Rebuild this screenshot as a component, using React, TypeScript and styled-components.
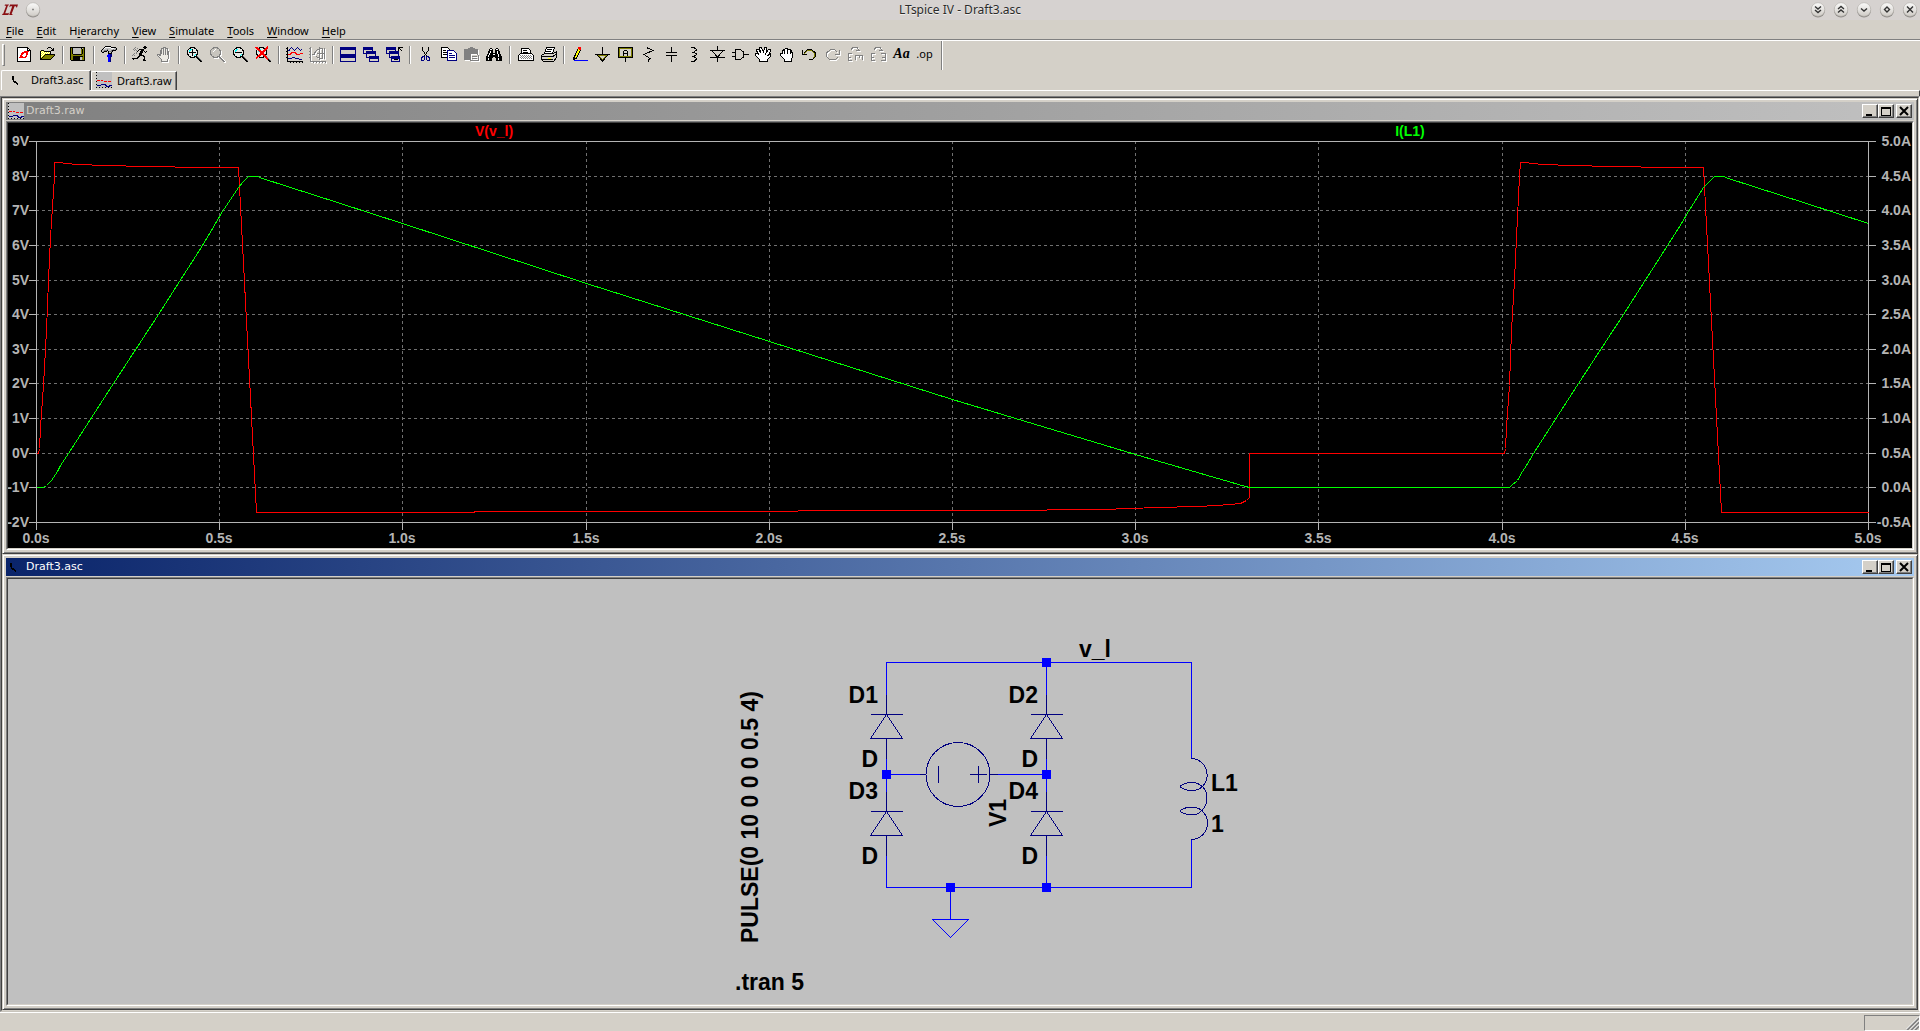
import React, { useLayoutEffect, useRef, useState } from 'react';
import styled, { createGlobalStyle, css } from 'styled-components';

const FACE = '#d4d0c8';
const SHADOW = '#808080';
const DARK = '#404040';

const Global = createGlobalStyle`
  * { box-sizing: border-box; }
  html, body { margin: 0; padding: 0; }
  body { background: ${FACE}; font-family: "Noto Sans", "DejaVu Sans", sans-serif; font-size: 11px; color: #000; }
  button { font: inherit; color: inherit; margin: 0; padding: 0; border: 0; background: none; }
`;

const Shell = styled.div`
  display: flex;
  flex-direction: column;
  height: 100vh;
  overflow: hidden;
`;

/* ---------- window title bar ---------- */
const TitleBar = styled.header`
  display: grid;
  grid-template-columns: 1fr auto 1fr;
  align-items: center;
  height: 20px;
  padding: 0 2px;
  background: #d6d2d0;
`;
const TitleText = styled.h1`
  margin: 0;
  font-size: 12px;
  font-weight: 400;
  line-height: 20px;
  color: #2a2a2a;
  text-shadow: 0 1px 0 #f0eeec;
`;
const TitleGroup = styled.div<{ $end?: boolean; $gap: number }>`
  display: flex;
  align-items: center;
  justify-content: ${p => (p.$end ? 'flex-end' : 'flex-start')};
  gap: ${p => p.$gap}px;
`;
const RoundButton = styled.button`
  display: grid;
  place-items: center;
  width: 16px;
  height: 16px;
  svg { display: block; }
`;

/* ---------- menu ---------- */
const MenuBar = styled.nav`
  display: flex;
  gap: 13px;
  height: 21px;
  padding: 0 6px;
  border-bottom: 1px solid #fff;
  box-shadow: inset 0 -1px 0 ${SHADOW};
`;
const MenuButton = styled.button`
  line-height: 21px;
  height: 20px;
  span { text-decoration: underline; text-underline-offset: 2px; }
`;

/* ---------- toolbar ---------- */
const ToolBar = styled.div`
  display: flex;
  align-items: flex-start;
  align-self: flex-start;
  height: 29px;
  padding: 2px 6px 0 2px;
  border-right: 1px solid #fff;
  box-shadow: inset -1px 0 0 ${SHADOW};
`;
const Grip = styled.i`
  width: 3px;
  height: 22px;
  margin: 1px 8px 0 0;
  border: 1px solid;
  border-color: #fff ${SHADOW} ${SHADOW} #fff;
`;
const Separator = styled.i`
  width: 2px;
  height: 18px;
  margin: 3px 3px 0;
  border-left: 1px solid ${SHADOW};
  border-right: 1px solid #fff;
`;
const ToolButton = styled.button`
  display: grid;
  place-items: center;
  width: 23px;
  height: 22px;
  svg { display: block; }
  &:disabled svg { filter: drop-shadow(1px 1px 0 #fff); }
`;

/* ---------- document tabs ---------- */
const Tabs = styled.div`
  display: flex;
  align-items: flex-end;
  height: 20px;
  padding-left: 1px;
`;
const Tab = styled.button<{ $active?: boolean }>`
  display: flex;
  align-items: center;
  gap: 5px;
  height: ${p => (p.$active ? 20 : 19)}px;
  width: ${p => (p.$active ? 90 : 86)}px;
  padding: 0 0 2px ${p => (p.$active ? 8 : 4)}px;
  border-top: 1px solid #fff;
  border-left: 1px solid #fff;
  border-right: 1px solid ${DARK};
  box-shadow: inset -1px 0 0 ${SHADOW};
  border-top-left-radius: 2px;
  background: ${FACE};
  white-space: nowrap;
`;
const Pane = styled.div`
  display: flex;
  height: 6px;
  &::before { content: ''; width: 90px; }
  &::after {
    content: '';
    flex: 1;
    border-top: 1px solid #fff;
    border-right: 1px solid ${DARK};
  }
`;

/* ---------- MDI area ---------- */
const Client = styled.main`
  display: flex;
  flex-direction: column;
  flex: 1;
  min-height: 0;
  border: 1px solid;
  border-color: ${SHADOW} #fff #c8c4bc ${SHADOW};
  background: ${SHADOW};
`;
const ClientInner = styled.div`
  display: grid;
  grid-template-rows: 1fr 1fr;
  flex: 1;
  min-height: 0;
  border: 1px solid;
  border-color: ${DARK} ${FACE} ${FACE} ${DARK};
`;
const Frame = styled.section`
  display: flex;
  flex-direction: column;
  min-height: 0;
  min-width: 0;
  border: 1px solid;
  border-color: ${FACE} ${DARK} ${DARK} ${FACE};
  box-shadow: inset 1px 1px 0 #fff, inset -1px -1px 0 ${SHADOW};
  background: ${FACE};
  padding: 3px;
`;
const Caption = styled.div<{ $active?: boolean }>`
  display: flex;
  align-items: center;
  height: 18px;
  padding: 0 2px;
  gap: 2px;
  color: ${p => (p.$active ? '#fff' : FACE)};
  background: ${p =>
    p.$active
      ? 'linear-gradient(90deg, #0a246a, #a6caf0)'
      : 'linear-gradient(90deg, #808080, #c0c0c0)'};
`;
const CaptionText = styled.h2`
  flex: 1;
  margin: 0;
  font-family: "DejaVu Sans", sans-serif;
  font-size: 11px;
  line-height: 18px;
  font-weight: 400;
`;
const CaptionButtons = styled.div`
  display: flex;
  button:last-child { margin-left: 2px; }
`;
const CaptionButton = styled.button`
  display: grid;
  place-items: center;
  width: 16px;
  height: 14px;
  color: #000;
  background: ${FACE};
  border: 1px solid;
  border-color: #fff ${DARK} ${DARK} #fff;
  box-shadow: inset -1px -1px 0 ${SHADOW};
  svg { display: block; }
`;
const Content = styled.div<{ $bg: string }>`
  flex: 1;
  min-height: 0;
  margin-top: 1px;
  border: 1px solid;
  border-color: ${SHADOW} #fff #fff ${SHADOW};
  background: ${FACE};
  display: flex;
  > div {
    flex: 1;
    min-width: 0;
    border: 1px solid;
    border-color: ${DARK} ${FACE} ${FACE} ${DARK};
    background: ${p => p.$bg};
    overflow: hidden;
  }
  svg { display: block; }
`;

/* ---------- status bar ---------- */
const StatusBar = styled.footer`
  display: flex;
  justify-content: flex-end;
  height: 19px;
  padding: 2px 0 0;
  border-top: 1px solid #fff;
`;
const StatusPane = styled.div`
  display: flex;
  align-items: flex-end;
  justify-content: flex-end;
  width: 56px;
  border: 1px solid;
  border-color: ${SHADOW} #fff #fff ${SHADOW};
`;

/* ---------- icons ---------- */
const I = ({ children, size = 17 }: { children: React.ReactNode; size?: number }) => (
  <svg width={size} height={size} viewBox={`0 0 ${size} ${size}`} shapeRendering="crispEdges" fill="none" stroke="#000" strokeWidth="1" aria-hidden="true">
    {children}
  </svg>
);

/* Paints a bitmap: one string per row, one character per pixel. */
const INK: Record<string, string> = {
  k: '#000', w: '#fff', r: '#f00', b: '#000080', B: '#00f', o: '#808000', y: '#ff0', g: '#808080', s: '#c0c0c0', c: '#0ff', m: '#800000',
};
const Bits = ({ rows, w = 17, h = 16 }: { rows: string[]; w?: number; h?: number }) => (
  <svg width={w} height={h} viewBox={`0 0 ${w} ${h}`} shapeRendering="crispEdges" aria-hidden="true">
    {rows.flatMap((row, y) =>
      [...row].map((ch, x) => (INK[ch] ? <rect key={`${x}-${y}`} x={x} y={y} width={1} height={1} fill={INK[ch]} /> : null)),
    )}
  </svg>
);

const icons = {
  newFile: (
    <I>
      <path d="M1.5 1.5H11.5L14.5 4.5V15.5H1.5Z" fill="#fff" />
      <path d="M11.5 1.5V4.5H14.5" />
      <path d="M6 6H9V7H8V8H7V9H6V10H7V11H9V12H3V11H4V9H5V7H6ZM8 5H13V6H12V9H11V11H10V12H8V11H9V10H10V7H8Z" fill="#f00" stroke="none" />
    </I>
  ),
  open: (
    <Bits
      rows={[
        '................',
        '.........kkk....',
        '........k...k.k.',
        '.............kk.',
        '..kkk.......kkk.',
        '.kywykkkkkkk....',
        '.kwywywywywk....',
        '.kywywywywyk....',
        '.kwywykkkkkkkkkk',
        '.kywykoooooooook',
        '.kwykoooooooook.',
        '.kykoooooooook..',
        '.kkoooooooook...',
        '.kkkkkkkkkkk....',
      ]}
    />
  ),
  save: (
    <Bits
      rows={[
        '................',
        'kkkkkkkkkkkkkkk.',
        'kokssssssssksok.',
        'kokssssssssokok.',
        'kokssssssssokok.',
        'kokssssssssokok.',
        'kokssssssssokok.',
        'kokssssssssokok.',
        'kookkkkkkkkkook.',
        'kooooooooooooko.',
        'kookkkkkkkkkkok.',
        'kookkkkkkkssook.',
        'kookkkkkkkssook.',
        'kookkkkkkkssook.',
        '.kkkkkkkkkkkkkk.',
      ].map(r => r.replace('oko.', 'ook.'))}
    />
  ),
  hammer: (
    <Bits
      rows={[
        '....kkkkkk......',
        '...kwwwwwwkkkkk.',
        '..kwsssssswwwssk',
        '.kssssgsssssgsgk',
        'kssgggksssgkkkk.',
        'ksgkkk.kgggk....',
        '.kk....kssk.....',
        '.......kkkk.....',
        '.......BBbb.....',
        '......BBBbb.....',
        '......BBBbb.....',
        '.......BBb......',
        '.......BBb......',
        '.......BBb......',
        '.......BBb......',
        '.......BBb......',
      ]}
    />
  ),
  run: (
    <Bits
      rows={[
        '............kk..',
        '...g.......kkkk.',
        '..g..g......kk..',
        '.g.g...kkkkk....',
        '..g.g.k..kkk....',
        '.....k..kkk.k.k.',
        '....g...kkk..k..',
        '..g.g..kkk......',
        '.g.....kkk......',
        'g.g....kkkkk....',
        '......kk...kk...',
        '.....kk.....k...',
        'kkkkkk......k...',
        '.k.........kk...',
        '...........kkk..',
      ]}
    />
  ),
  halt: (
    <I>
      <path d="M5.5 10V4.5H6.5V8V2.5H8.5V8V1.5H10.5V8V2.5H12.5V9V5.5H13.5V12L12.5 13.5V15.5H6.5V13.5L2.5 9.5V8.5H4L5.5 10" fill="#eceae4" stroke="#808080" />
      <path d="M8.5 3V9M10.5 3V9" stroke="#808080" />
    </I>
  ),
};

const Lens = ({ kind }: { kind: 'in' | 'out' | 'pan' | 'fit' }) => {
  const pan = kind === 'pan';
  const ink = pan ? '#808080' : '#000';
  return (
    <I>
      <circle cx="6.5" cy="6.5" r="5" fill={pan ? '#c8c5be' : '#e8e8e4'} stroke={ink} />
      {!pan && <path d="M3 5.5L5.5 3M7.5 10.5L10 8" stroke="#0ff" />}
      {kind === 'in' && <path d="M3 6.5H10M6.5 3V10" />}
      {kind === 'out' && <path d="M3 6.5H10" />}
      {pan && <path d="M4 6L6.5 3.5" stroke="#fff" />}
      <path d="M10 10L16 16" stroke={ink} strokeWidth="2" />
      <path d="M11 10L16 15" stroke={pan ? '#fff' : '#808080'} />
      {kind === 'fit' && <path d="M1 1L13 13.5M13 1L1 12.5" stroke="#f00" strokeWidth="2" />}
    </I>
  );
};

const PlotIcon = ({ dim }: { dim?: boolean }) => (
  <I>
    <path d="M1.5 1V15.5H17" stroke={dim ? '#808080' : '#000'} />
    <path d="M0 2.5H1M0 5.5H1M0 8.5H1M0 11.5H1M4.5 16V17M7.5 16V17M10.5 16V17M13.5 16V17M16.5 16V17" stroke={dim ? '#808080' : '#000'} />
    {dim ? (
      <path d="M5 8L7.5 4.5L10.5 2.5H13.5V12.5H10.5L7.5 10.5M3 8H6M10.5 1V14M8 7.5H16M15.5 2V13" stroke="#808080" />
    ) : (
      <>
        <path d="M2 4.5H3L5.5 1.5L8.5 4.5L11.5 1.5L14.5 4.5L16 3" stroke="#000080" />
        <path d="M2 8.5H4L6 6.5H9L11 8.5H13L15 7.5H17" stroke="#f00" />
        <path d="M2 12.5H6M6 11.5H9M9 12.5H13M13 13.5H16" stroke="#000080" />
      </>
    )}
  </I>
);

const tile = (x: number, y: number, w: number, h: number) => (
  <g key={`${x}-${y}`}>
    <rect x={x + 0.5} y={y + 0.5} width={w - 1} height={h - 1} fill={FACE} stroke="#000080" />
    <rect x={x} y={y} width={w} height={3} fill="#000080" stroke="none" />
  </g>
);

const Hand = ({ open }: { open?: boolean }) => (
  <I>
    {open ? (
      <path d="M4.5 15.5V13.5L0.5 9.5V7.5H2.5L4 9L1.5 4.5V3.5H3.5L6 7L4.5 2.5V1.5H6.5L8.5 6L9.5 1.5H11.5L11 7L13.5 3.5H15.5V5L13 9.5L15.5 8V10.5L12.5 13.5V15.5Z" fill="#fff" />
    ) : (
      <path d="M6.5 15.5V13.5L2.5 9.5V7.5H4.5V5.5L5.5 3.5H6.5L7.5 2.5H9L10.5 3.5H12L13.5 5V6H14.5V11L13.5 12.5V15.5ZM6.5 4V8M9.5 3V8M12.5 5V8" fill="#fff" />
    )}
  </I>
);

const SmallPlot = () => (
  <svg width="16" height="16" viewBox="0 0 16 16" shapeRendering="crispEdges" fill="none" aria-hidden="true">
    <rect width="16" height="16" fill="#c0c0c0" />
    <path d="M0.5 0V16" stroke="#000" strokeDasharray="1 2" />
    <path d="M1 8.5H4M5 8.5H7M8 9.5H11M12 9.5H15" stroke="#f00" />
    <path d="M1 13.5H4L6 12.5H9L11 14.5H13L14 13.5H16" stroke="#000080" />
    <path d="M3 15.5H4M6 15.5H7M9 15.5H10M12 15.5H13M15 15.5H16" stroke="#000" />
  </svg>
);
const SmallSchematic = () => (
  <svg width="16" height="16" viewBox="0 0 16 16" shapeRendering="crispEdges" aria-hidden="true">
    <path d="M1 4H3V9H5V10H6V11H7V12H7V13H6V12H5V11H3V10H2V8H1Z" transform="translate(1 0)" fill="#000" />
  </svg>
);

const binoculars = (
  <Bits
    rows={[
      '................',
      '................',
      '....kk....kk....',
      '...kwwk..kwwk...',
      '...kkkk..kkkk...',
      '..kkwkk..kkwkk..',
      '..kkwkk..kkwkk..',
      '..kwkkkkkkkwkk..',
      '.kkwkkkwwkkkwkk.',
      '.kwkkkkkkkkkwkk.',
      'kkwkkkkkkkkkwkkk',
      'kkkkkkk..kkkkkkk',
      'kkwkkk....kkwkkk',
      'kkwkkk....kkwkkk',
      'kkkkkk....kkkkkk',
    ]}
  />
);

type Tool = { label: string; icon?: React.ReactNode; off?: boolean };
const tools: Tool[][] = [
  [
    { label: 'New schematic', icon: icons.newFile },
    { label: 'Open', icon: icons.open },
  ],
  [{ label: 'Save', icon: icons.save }],
  [{ label: 'Control panel', icon: icons.hammer }],
  [
    { label: 'Run', icon: icons.run },
    { label: 'Halt', icon: icons.halt, off: true },
  ],
  [
    { label: 'Zoom in', icon: <Lens kind="in" /> },
    { label: 'Pan', icon: <Lens kind="pan" />, off: true },
    { label: 'Zoom out', icon: <Lens kind="out" /> },
    { label: 'Zoom full extents', icon: <Lens kind="fit" /> },
  ],
  [
    { label: 'Autorange', icon: <PlotIcon /> },
    { label: 'Setup plot', icon: <PlotIcon dim />, off: true },
  ],
  [
    { label: 'Tile windows', icon: <I>{tile(0, 1, 16, 8)}{tile(0, 9, 16, 7)}</I> },
    { label: 'Cascade windows', icon: <I>{tile(0, 1, 10, 7)}{tile(3, 5, 10, 7)}{tile(6, 10, 10, 6)}</I> },
    {
      label: 'Close all windows',
      icon: (
        <I>
          {tile(0, 1, 10, 7)}{tile(3, 5, 10, 7)}{tile(5, 10, 9, 6)}
          <path d="M12.5 5V1.5H17M13 2L16.5 5.5M8 13.5H12" />
        </I>
      ),
    },
  ],
  [
    {
      label: 'Cut',
      icon: (
        <I>
          <path d="M5.5 1V4L9.5 10M11.5 1V4L7.5 10" />
          <path d="M7.5 10.5L6 10.5L4.5 12V14L5.5 14.5H6.5L7.5 13ZM9.5 10.5L11 10.5L12.5 12V14L11.5 14.5H10.5L9.5 13Z" stroke="#000080" />
        </I>
      ),
    },
    {
      label: 'Copy',
      icon: (
        <I>
          <path d="M1.5 1.5H7.5L9.5 3.5V11.5H1.5Z" fill="#fff" />
          <path d="M3 4.5H6M3 6.5H8M3 8.5H8" />
          <path d="M7.5 4.5H13.5L16.5 7.5V14.5H7.5Z" fill="#fff" stroke="#000080" />
          <path d="M9 7.5H12M9 9.5H15M9 11.5H15" stroke="#000080" />
        </I>
      ),
    },
    {
      label: 'Paste',
      off: true,
      icon: (
        <I>
          <path d="M1 3H5V2H7V1H10V2H12V3H15V8H7V14H1Z" fill="#808080" stroke="none" />
          <path d="M7.5 7.5H13.5L15.5 9.5V14.5H7.5ZM9 10.5H14M9 12.5H14" stroke="#808080" />
        </I>
      ),
    },
    { label: 'Find', icon: binoculars },
  ],
  [
    {
      label: 'Print setup',
      icon: (
        <I>
          <path d="M4.5 7V2.5H11.5L13.5 4.5V7M6 4.5H10M6 6.5H11" fill="#fff" />
          <path d="M1.5 9.5L3.5 7.5H14.5L16.5 9.5V14.5H1.5Z" fill="#fff" />
          <path d="M3 9.5H15M3 11.5H15" stroke="#808080" strokeDasharray="1 1" />
          <path d="M4 10.5H16M4 12.5H16" stroke="#808080" strokeDasharray="1 1" />
        </I>
      ),
    },
    {
      label: 'Print',
      icon: (
        <I>
          <path d="M4.5 7.5L6.5 1.5H14.5L12.5 7.5Z" fill="#fff" />
          <path d="M7 3.5H12M6 5.5H11" />
          <path d="M1.5 9.5L4.5 7.5H13.5L16.5 5.5V11.5L13.5 15.5H3.5L1.5 13.5Z" fill="#d4d0c8" />
          <path d="M2 10.5H13L16 8M2 13.5H13" />
          <path d="M8 12.5H11" stroke="#ff0" />
        </I>
      ),
    },
  ],
  [
    {
      label: 'Wire',
      icon: (
        <I>
          <path d="M3.5 10.5L7.5 2L10 3L5.5 12L3.5 13.5Z" fill="#ff0" />
          <path d="M7 1H10V4H8Z" fill="#f00" stroke="none" />
          <path d="M2.5 11V14" strokeWidth="2" />
          <path d="M3 14.5H17" stroke="#00f" />
        </I>
      ),
    },
    {
      label: 'Ground',
      icon: (
        <I>
          <path d="M8.5 1V8M1 8.5H16" />
          <path d="M4 9.5H13L8.5 14Z" stroke="#808000" />
          <path d="M3 9L8.5 15L14 9" />
        </I>
      ),
    },
    {
      label: 'Label net',
      icon: (
        <I>
          <rect x="1.5" y="1.5" width="14" height="10" />
          <path d="M2.5 2V11M14.5 2V11M2 2.5H15M2 10.5H15" stroke="#808000" />
          <path d="M6.5 10V5.5L7.5 4.5H9.5L10.5 5.5V10M7 7.5H10M8.5 12V16" />
        </I>
      ),
    },
    { label: 'Resistor', icon: <I><path d="M7.5 1V2L13 4.5L4 8.5L10 12.5L8.5 14V16" /></I> },
    { label: 'Capacitor', icon: <I><path d="M8.5 1V6M3 6.5H14M3 9.5H14M8.5 10V16" /></I> },
    { label: 'Inductor', icon: <I><path d="M5 1.5H8L10 3V4.5L8 6H6H8L10 7.5V9L8 10.5H6H8L10 12V13.5L8 15.5H5" /></I> },
    { label: 'Diode', icon: <I><path d="M8.5 0V4M8.5 11V16M1 4.5H16M1 11.5H16M3 5L8.5 11L14 5" /></I> },
    { label: 'Component', icon: <I><path d="M0 6.5H4M0 10.5H4M12 8.5H17" /><path d="M3.5 3.5H8.5L11.5 6V11L8.5 13.5H3.5Z" fill="#d4d0c8" /></I> },
    { label: 'Move', icon: <Hand open /> },
    { label: 'Drag', icon: <Hand /> },
    {
      label: 'Undo',
      icon: (
        <I>
          <path d="M3 7.5L6.5 4.5H10.5L13.5 7.5V10.5L11.5 12.5" stroke="#808000" />
          <path d="M1.5 4V8.5H6M3 7L6.5 3.5H10.5L14.5 7V10.5L11.5 13.5H8" />
        </I>
      ),
    },
    { label: 'Redo', off: true, icon: <I><path d="M15.5 4V8.5H11M13 6L10.5 3.5H6.5L2.5 7V10.5L5.5 13.5H11.5L13.5 11.5" stroke="#808080" /></I> },
    { label: 'Rotate', off: true, icon: <I><path d="M1.5 15V7.5H5M2 11H4M1 14.5H5M8 9.5H16M8.5 10V14M12 10V12M15.5 10V14M4 3.5L6 1.5H10L12 4M9 4.5H13" stroke="#808080" /></I> },
    { label: 'Mirror', off: true, icon: <I><path d="M1.5 15V7.5H5M2 11H4M1 14.5H5M11 7.5H15M15.5 7V15M12 11H15M11 14.5H15M4 3.5L6 1.5H10L12 4M9 4.5H13" stroke="#808080" /></I> },
    { label: 'Text' },
    { label: 'SPICE directive' },
  ],
];

const Glyph = styled.span<{ $op?: boolean }>`
  line-height: 22px;
  ${p =>
    p.$op
      ? css`
          font-family: "Noto Sans", sans-serif;
          font-size: 11px;
        `
      : css`
          font-family: "Liberation Serif", serif;
          font-size: 14px;
          font-style: italic;
          font-weight: 700;
        `}
`;

const LtLogo = () => (
  <svg width="16" height="12" viewBox="0 0 16 12" aria-hidden="true">
    <path d="M3 0.5H7L6.6 1.5H6L3.2 9.2H6.6L7.4 8L6.4 11H0L0.6 9.8H1.2L4.2 1.8H2.6ZM8 0.5H16L15 3.4H14.4L14 2.2H12.6L9.6 10H10.6L10.2 11H7.2L10.2 2.2H8.6L7.2 3.2Z" fill="#8a0f14" />
  </svg>
);

const Round = ({ d, label }: { d: string; label: string }) => (
  <RoundButton aria-label={label}>
    <svg width="16" height="16" viewBox="0 0 16 16" fill="none">
      <defs>
        <linearGradient id="knob" x1="0" y1="0" x2="0" y2="1">
          <stop offset="0" stopColor="#fbfbfa" />
          <stop offset="1" stopColor="#cfcbc6" />
        </linearGradient>
      </defs>
      <circle cx="8" cy="8.5" r="7" fill="#8f8c88" />
      <circle cx="8" cy="7.5" r="6.8" fill="url(#knob)" stroke="#b5b1ac" strokeWidth="0.6" />
      <path d={d} stroke="#333" strokeWidth="1.4" />
    </svg>
  </RoundButton>
);

/* ---------- waveform plot ---------- */
type Pt = [number, number];
const pulse: Pt[] = [
  [0, 0], [0.006, 0], [0.009, 0.15], [0.0118, 0.75], [0.019, 1.96], [0.0264, 3.54], [0.0336, 4.99], [0.039, 6.24], [0.048, 8],
  [0.05, 8.4], [0.06, 8.39], [0.082, 8.36], [0.112, 8.34], [0.191, 8.31], [0.295, 8.28], [0.459, 8.25], [0.55, 8.25], [0.6, -1.71],
];
const current: Pt[] = [
  [0, 0], [0.019, 0], [0.027, 0.03], [0.041, 0.11], [0.057, 0.24], [0.0655, 0.32], [0.087, 0.49], [0.209, 1.5], [0.332, 2.5],
  [0.452, 3.5], [0.489, 3.82], [0.508, 3.99], [0.551, 4.33], [0.565, 4.42], [0.579, 4.49], [0.603, 4.5], [0.617, 4.47],
  [0.83, 4.106], [1, 3.81],
];
const later = (pts: Pt[]): Pt[] => pts.map(([t, v]) => [t + 4, v]);
const voltageTrace: Pt[] = [
  ...pulse, [1.19, -1.71], [1.2, -1.69], [2.07, -1.69], [2.09, -1.66], [2.61, -1.65], [2.91, -1.62], [3.06, -1.58], [3.17, -1.54],
  [3.22, -1.51], [3.26, -1.48], [3.286, -1.44], [3.302, -1.37], [3.31, -1.28], [3.31, 0], ...later(pulse), [5, -1.71],
];
const currentTrace: Pt[] = [
  ...current, [1.5, 2.95], [2, 2.11], [2.5, 1.28], [3, 0.485], [3.3, 0.02], [3.31, 0], ...later(current),
];
const AXIS = '#b4b4b4';
const GRID = '#707070';

const Plot = () => {
  const ref = useRef<HTMLDivElement>(null);
  const [size, setSize] = useState({ w: 1904, h: 425 });
  useLayoutEffect(() => {
    const el = ref.current;
    if (!el) return;
    const measure = () => setSize({ w: el.clientWidth, h: el.clientHeight });
    measure();
    const ro = new ResizeObserver(measure);
    ro.observe(el);
    return () => ro.disconnect();
  }, []);

  const left = 28;
  const top = 18;
  const right = size.w - 44;
  const bottom = size.h - 26;
  const snap = (n: number) => Math.round(n) + 0.5;
  const x = (t: number) => left + (t / 5) * (right - left);
  const y = (f: number) => top + f * (bottom - top);
  const rows = Array.from({ length: 12 }, (_, i) => i);
  const cols = Array.from({ length: 11 }, (_, i) => i);
  const line = (pts: Pt[], max: number, span: number) =>
    pts.map(([t, v]) => `${snap(x(t))},${snap(y((max - v) / span))}`).join(' ');

  return (
    <div ref={ref}>
      <svg width={size.w} height={size.h} fontFamily='"Liberation Sans", Arial, sans-serif' fontWeight="700" fontSize="14">
        <g shapeRendering="crispEdges" fill="none">
          {rows.slice(1, -1).map(i => (
            <line key={i} x1={left} x2={right} y1={snap(y(i / 11))} y2={snap(y(i / 11))} stroke={GRID} strokeDasharray="3 3" />
          ))}
          {cols.slice(1, -1).map(i => (
            <line key={i} y1={top} y2={bottom} x1={snap(x(i / 2))} x2={snap(x(i / 2))} stroke={GRID} strokeDasharray="3 3" />
          ))}
          <g stroke={AXIS}>
            <rect x={left + 0.5} y={top + 0.5} width={right - left} height={bottom - top} />
            {rows.map(i => (
              <path key={i} d={`M${left - 7} ${snap(y(i / 11))}H${left}M${right} ${snap(y(i / 11))}H${right + 8}`} />
            ))}
            {cols.map(i => (
              <path key={i} d={`M${snap(x(i / 2))} ${bottom}V${bottom + 8}`} />
            ))}
          </g>
          <polyline points={line(voltageTrace, 9, 11)} stroke="#f00" />
          <polyline points={line(currentTrace, 5, 5.5)} stroke="#0f0" />
        </g>
        <g fill={AXIS}>
          {rows.map(i => (
            <React.Fragment key={i}>
              <text x={left - 7} y={Math.round(y(i / 11)) + 5} textAnchor="end">{`${9 - i}V`}</text>
              <text x={right + 43} y={Math.round(y(i / 11)) + 5} textAnchor="end">{`${(5 - i / 2).toFixed(1)}A`}</text>
            </React.Fragment>
          ))}
          {cols.map(i => (
            <text key={i} x={Math.round(x(i / 2))} y={bottom + 21} textAnchor="middle">{`${(i / 2).toFixed(1)}s`}</text>
          ))}
        </g>
        <text x={x(1.25)} y="13" textAnchor="middle" fill="#f00">V(v_l)</text>
        <text x={x(3.75)} y="13" textAnchor="middle" fill="#0f0">I(L1)</text>
      </svg>
    </div>
  );
};

/* ---------- schematic ---------- */
const Diode = ({ x, y }: { x: number; y: number }) => (
  <path d={`M${x} ${y - 20}V${y}M${x - 16} ${y}H${x + 16}M${x} ${y}L${x - 16} ${y + 24}H${x + 16}ZM${x} ${y + 24}V${y + 44}`} />
);
const nodes: Pt[] = [[1046, 662], [886, 774], [1046, 774], [950, 887], [1046, 887]];

const Schematic = () => (
  <div>
    <svg width="100%" height="100%" viewBox="8 579 1904 425" fontFamily='"Liberation Sans", Arial, sans-serif' fontWeight="700" fontSize="23">
      <g shapeRendering="crispEdges" fill="none" stroke="#00f">
        <path d="M886.5 695V662.5H1191.5V758M1046.5 662V695M886.5 758V792M1046.5 758V792M886.5 855V887.5H1191.5V839M1046.5 855V888M886 774.5H920M998 774.5H1046M950.5 887V919.5" />
        <path d="M932.5 919.5H968.5L950.5 937.5Z" />
        <g stroke="#000080">
          <Diode x={886.5} y={714.5} />
          <Diode x={1046.5} y={714.5} />
          <Diode x={886.5} y={811.5} />
          <Diode x={1046.5} y={811.5} />
          <circle cx="958" cy="774.5" r="32" />
          <path d="M920 774.5H926M990 774.5H998M938.5 766V783M978.5 766V783M970 774.5H987" />
          <path d="M1191.5 758.5C1202 759 1208 768 1207 777C1206 785 1200 790.5 1192 790.5C1186 790.5 1180.5 788 1180.5 786.5C1180.5 785 1186 782.5 1192 782.5C1202 783 1207 790 1207 798C1207 807 1200 815 1192 815C1186 815 1180.5 812.5 1180.5 811C1180.5 809.5 1186 807 1192 807C1202 807 1208 816 1207.5 824C1207 832 1201 839 1191.5 839.5" />
        </g>
      </g>
      <g fill="#00f" shapeRendering="crispEdges">
        {nodes.map(([x, y]) => (
          <rect key={`${x}-${y}`} x={x - 4} y={y - 4} width="9" height="9" />
        ))}
      </g>
      <g textAnchor="end">
        <text x="878" y="703">D1</text>
        <text x="878" y="767">D</text>
        <text x="878" y="799">D3</text>
        <text x="878" y="864">D</text>
        <text x="1038" y="703">D2</text>
        <text x="1038" y="767">D</text>
        <text x="1038" y="799">D4</text>
        <text x="1038" y="864">D</text>
      </g>
      <text x="1079" y="657">v_l</text>
      <text x="1211" y="791">L1</text>
      <text x="1211" y="832">1</text>
      <text x="735" y="990">.tran 5</text>
      <text transform="translate(1006 827) rotate(-90)">V1</text>
      <text transform="translate(758 943) rotate(-90)">PULSE(0 10 0 0 0 0.5 4)</text>
    </svg>
  </div>
);

const DocWindow = ({ title, active, icon, bg, children }: { title: string; active?: boolean; icon: React.ReactNode; bg: string; children: React.ReactNode }) => (
  <Frame>
    <Caption $active={active}>
      {icon}
      <CaptionText>{title}</CaptionText>
      <CaptionButtons>
        <CaptionButton aria-label="Minimize"><I size={12}><path d="M2 10H8" strokeWidth="2" /></I></CaptionButton>
        <CaptionButton aria-label="Maximize"><I size={12}><path d="M1.5 2.5H10.5V10.5H1.5ZM1 3.5H11" /></I></CaptionButton>
        <CaptionButton aria-label="Close"><I size={12}><path d="M2 2L10 10M10 2L2 10" strokeWidth="2" shapeRendering="auto" /></I></CaptionButton>
      </CaptionButtons>
    </Caption>
    <Content $bg={bg}>{children}</Content>
  </Frame>
);

const menus = ['File', 'Edit', 'Hierarchy', 'View', 'Simulate', 'Tools', 'Window', 'Help'];

export default function App() {
  return (
    <Shell>
      <Global />
      <TitleBar>
        <TitleGroup $gap={7}>
          <LtLogo />
          <Round label="Menu" d="M7.5 7.5H8.5" />
        </TitleGroup>
        <TitleText>LTspice IV - Draft3.asc</TitleText>
        <TitleGroup $end $gap={7}>
          <Round label="Keep below" d="M5 4.5L8 7L11 4.5M5 8L8 10.5L11 8" />
          <Round label="Keep above" d="M5 7L8 4.5L11 7M5 10.5L8 8L11 10.5" />
          <Round label="Minimize" d="M5 6.5L8 9L11 6.5" />
          <Round label="Maximize" d="M8 5L10.5 7.5L8 10L5.5 7.5Z" />
          <Round label="Close" d="M5 4.5L11 10.5M11 4.5L5 10.5" />
        </TitleGroup>
      </TitleBar>
      <MenuBar>
        {menus.map(m => {
          const k = m === 'Hierarchy' ? 1 : 0;
          return (
            <MenuButton key={m}>
              {m.slice(0, k)}<span>{m[k]}</span>{m.slice(k + 1)}
            </MenuButton>
          );
        })}
      </MenuBar>
      <ToolBar>
        <Grip />
        {tools.map((group, i) => (
          <React.Fragment key={i}>
            {i > 0 && <Separator />}
            {group.map(t => (
              <ToolButton key={t.label} aria-label={t.label} disabled={t.off}>
                {t.icon ?? (t.label === 'Text' ? <Glyph>Aa</Glyph> : <Glyph $op>.op</Glyph>)}
              </ToolButton>
            ))}
          </React.Fragment>
        ))}
      </ToolBar>
      <Tabs role="tablist">
        <Tab role="tab" aria-selected $active><SmallSchematic />Draft3.asc</Tab>
        <Tab role="tab" aria-selected={false}><SmallPlot />Draft3.raw</Tab>
      </Tabs>
      <Pane />
      <Client>
        <ClientInner>
          <DocWindow title="Draft3.raw" icon={<SmallPlot />} bg="#000"><Plot /></DocWindow>
          <DocWindow title="Draft3.asc" icon={<SmallSchematic />} bg="#c0c0c0" active><Schematic /></DocWindow>
        </ClientInner>
      </Client>
      <StatusBar>
        <StatusPane>
          <svg width="13" height="13" viewBox="0 0 13 13" aria-hidden="true">
            <path d="M1 13L13 1M5 13L13 5M9 13L13 9" stroke="#808080" strokeWidth="2" />
            <path d="M0 12.5L12.5 0M4 12.5L13 3.5M8 12.5L13 7.5" stroke="#fff" />
          </svg>
        </StatusPane>
      </StatusBar>
    </Shell>
  );
}
